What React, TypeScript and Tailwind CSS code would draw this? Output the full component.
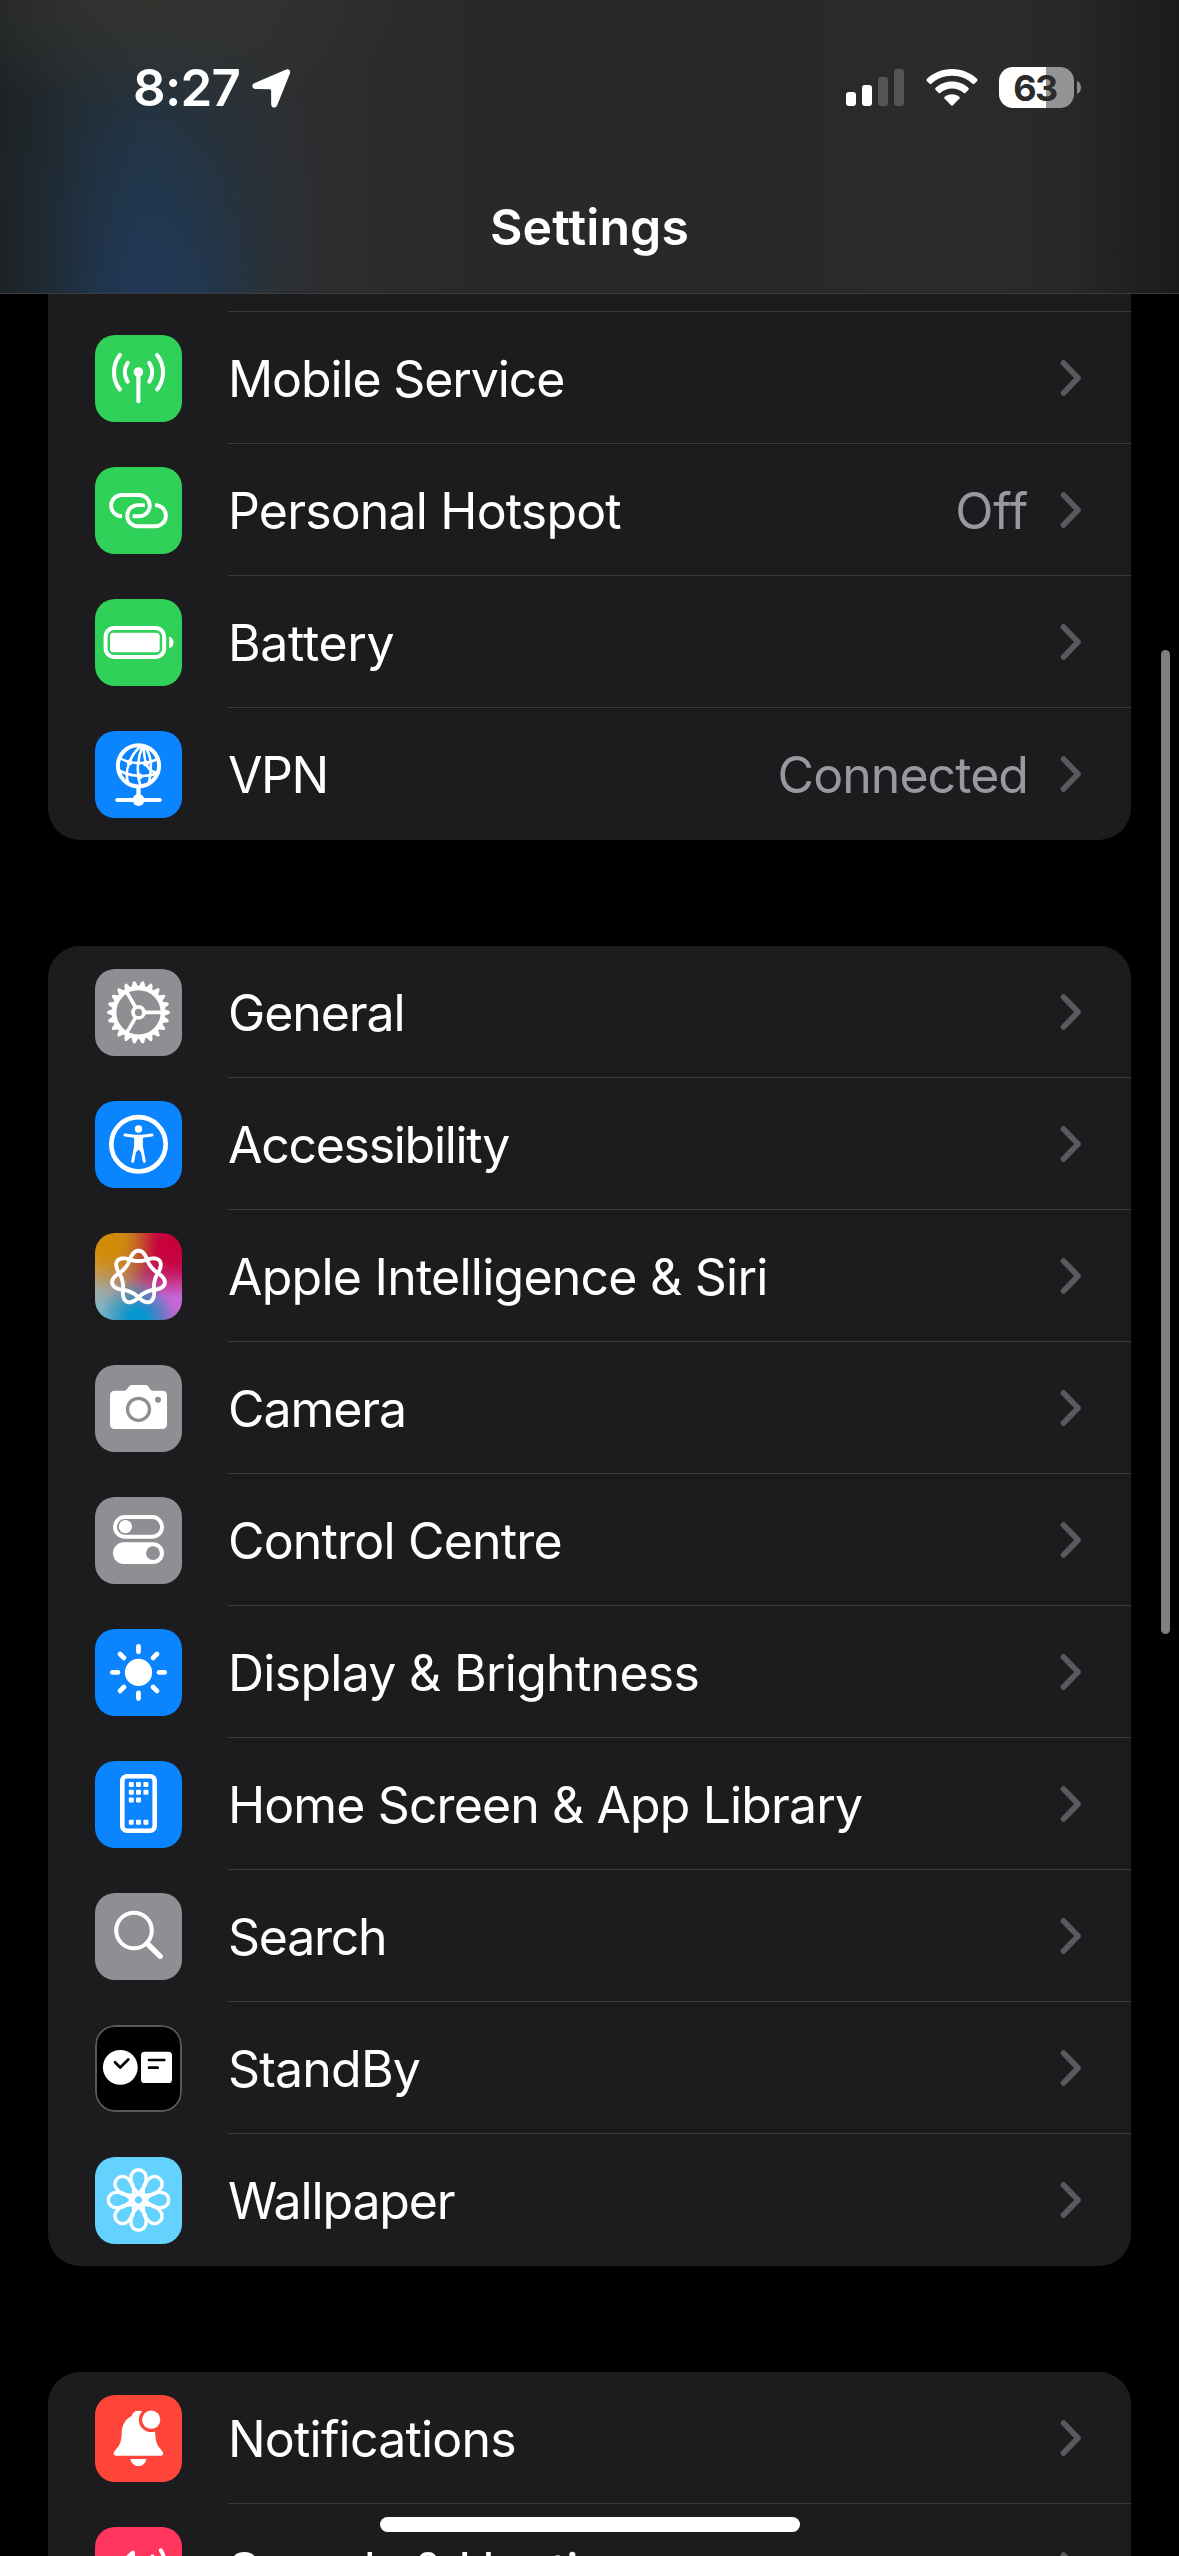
import type { ReactNode } from 'react';

type Item = {
  label: string;
  tracking: string;
  tile: string;
  icon: ReactNode;
  value?: string;
  valueTracking?: string;
};

function Glyph({ children }: { children: ReactNode }) {
  return (
    <svg viewBox="0 0 87 87" className="block h-[87px] w-[87px]" fill="none" stroke="none">
      {children}
    </svg>
  );
}

const MobileIcon = (
  <Glyph>
    <circle cx="43.4" cy="37" r="4.8" fill="#fff" />
    <g stroke="#fff" strokeWidth="4.1" strokeLinecap="round">
      <path d="M43.4 37V66.2" />
      <path d="M32.7 27.8A17 17 0 0 0 32.7 46.6" />
      <path d="M54.3 27.8A17 17 0 0 1 54.3 46.6" />
      <path d="M24.9 19.9A28 28 0 0 0 24.9 54.4" />
      <path d="M62.1 19.9A28 28 0 0 1 62.1 54.4" />
    </g>
  </Glyph>
);

const HotspotIcon = (
  <Glyph>
    <g stroke="#fff" strokeWidth="3.9">
      <path d="M27 49.2h-.3A10.6 10.6 0 0 1 26.7 28H44.2A10.6 10.6 0 0 1 44.2 49.2H37.6" />
      <path d="M49.8 38.1H42.8A10.6 10.6 0 0 0 42.8 59.3H60.3A10.6 10.6 0 0 0 60.3 38.1H60" />
    </g>
  </Glyph>
);

const BatteryIcon = (
  <Glyph>
    <rect x="10.6" y="29" width="58.6" height="29" rx="8.6" stroke="#fff" strokeWidth="4" />
    <rect x="15" y="33.7" width="49.7" height="19.6" rx="3.6" fill="#fff" />
    <path d="M74.2 37.6c2.6.8 4.4 3.2 4.4 6s-1.8 5.2-4.4 6z" fill="#fff" />
  </Glyph>
);

const VpnIcon = (
  <Glyph>
    <circle cx="43.5" cy="34.8" r="20.6" stroke="#fff" strokeWidth="4" />
    <g stroke="#fff" strokeWidth="2.6">
      <path d="M45.5 15.5C40 20 36 27 34.6 31.3C31 39 31 46 33.5 53" />
      <path d="M47.5 15.5C42.5 27 41 42 45.5 55" />
      <path d="M48.5 15.5C49 22 49.5 27 50.9 32.6C53 38 58 41 62 42" />
      <path d="M50 16C56 24 57.5 34 54 52" />
      <path d="M25.5 27.5C34 32.5 50 34.5 62.5 28" />
      <path d="M24 39.500C34 45 50 47 62 42.500" />
    </g>
    <circle cx="34.6" cy="31.3" r="2.9" fill="#fff" />
    <circle cx="50.9" cy="32.6" r="2.9" fill="#fff" />
    <circle cx="44.8" cy="45.3" r="2.9" fill="#fff" />
    <path d="M43.5 56V69" stroke="#fff" strokeWidth="4.3" />
    <path d="M22.3 69H64.7" stroke="#fff" strokeWidth="4.2" strokeLinecap="round" />
    <circle cx="43.5" cy="69" r="5.9" fill="#fff" />
  </Glyph>
);

const teeth = Array.from({ length: 22 }, (_, i) => (i * 360) / 22);

const GeneralIcon = (
  <Glyph>
    <g transform="translate(43.5 43.4)">
      {teeth.map((a) => (
        <path
          key={a}
          transform={`rotate(${a})`}
          d="M25.500-3.400L27-2.900L30.200-1.600Q31.500-1 31.500 0T30.200 1.600L27 2.900L25.500 3.400Z"
          fill="#fff"
        />
      ))}
      <circle r="24.400" stroke="#fff" strokeWidth="4.600" />
      <circle r="5.5" stroke="#fff" strokeWidth="3.7" />
      <g stroke="#fff" strokeWidth="3.6">
        <path d="M6.500 0H24" />
        <path d="M6.500 0H24" transform="rotate(120)" />
        <path d="M6.500 0H24" transform="rotate(240)" />
      </g>
    </g>
  </Glyph>
);

const AccessibilityIcon = (
  <Glyph>
    <circle cx="43.5" cy="43.3" r="27.2" stroke="#fff" strokeWidth="4.7" />
    <circle cx="43.5" cy="28" r="3.7" fill="#fff" />
    <g stroke="#fff" strokeWidth="3" strokeLinecap="round" strokeLinejoin="round">
      <path d="M30 34L39.500 35.300H47.500L57 34" />
      <path d="M40.500 46L37.700 60.300" />
      <path d="M46.500 46L49.300 60.300" />
    </g>
    <path d="M38.500 34.200H48.500L47.800 39L48 47L45.500 51L43.500 48.500L41.500 51L39 47L39.200 39Z" fill="#fff" />
  </Glyph>
);

const knot =
  Array.from({ length: 281 }, (_, i) => {
    const t = (i / 280) * Math.PI * 4;
    const p = 3.5 * t;
    const r = 20.8 + 5.2 * Math.cos(p) + 0.9 * Math.cos(2 * p);
    const x = 43.5 + r * Math.sin(t);
    const y = 44.5 - r * Math.cos(t);
    return `${i ? 'L' : 'M'}${x.toFixed(2)} ${y.toFixed(2)}`;
  }).join('') + 'Z';

const SiriIcon = (
  <Glyph>
    <path d={knot} stroke="#fff" strokeWidth="3.900" strokeLinejoin="round" />
  </Glyph>
);

const CameraIcon = (
  <Glyph>
    <path
      d="M20 25.800H28.500C30.500 25.800 31.300 25 32.500 23.500L33.700 21.800C34.700 20.500 35.600 20 37.300 20H50C51.700 20 52.600 20.500 53.500 21.800L54.700 23.500C55.800 25 56.600 25.800 58.500 25.800H67C70.300 25.800 72 27.600 72 30.800V59C72 62.200 70.300 64 67 64H20C16.700 64 15 62.200 15 59V30.800C15 27.600 16.700 25.800 20 25.800Z"
      fill="#fff"
    />
    <circle cx="43.5" cy="44.3" r="11" stroke="#8e8e93" strokeWidth="3.3" />
    <circle cx="63" cy="34.8" r="3" fill="#8e8e93" />
  </Glyph>
);

const ControlIcon = (
  <Glyph>
    <rect x="20" y="20" width="47" height="19.8" rx="9.9" stroke="#fff" strokeWidth="3.9" />
    <circle cx="30.4" cy="29.7" r="6.6" fill="#fff" />
    <rect x="18" y="45.3" width="51" height="21.7" rx="10.85" fill="#fff" />
    <circle cx="58" cy="56.2" r="6.9" fill="#8e8e93" />
  </Glyph>
);

const BrightnessIcon = (
  <Glyph>
    <g transform="translate(43.5 43.4)">
      <circle r="13.6" fill="#fff" />
      {[0, 45, 90, 135, 180, 225, 270, 315].map((a) => (
        <path
          key={a}
          d="M20.600 0H26.100"
          transform={`rotate(${a})`}
          stroke="#fff"
          strokeWidth="4.8"
          strokeLinecap="round"
        />
      ))}
    </g>
  </Glyph>
);

const dots: [number, number][] = [
  [33.8, 21], [41, 21], [48.4, 21],
  [33.8, 28.8], [41, 28.8], [48.4, 28.8],
  [33.8, 36.4], [41, 36.4],
  [33.8, 58.8], [41, 58.8], [48.4, 58.8],
];

const HomeScreenIcon = (
  <Glyph>
    <rect x="27.3" y="15.3" width="32.4" height="54.4" rx="4.6" stroke="#fff" strokeWidth="4.6" />
    {dots.map(([x, y]) => (
      <rect key={`${x}-${y}`} x={x} y={y} width="5" height="5" rx="1" fill="#fff" />
    ))}
  </Glyph>
);

const SearchIcon = (
  <Glyph>
    <circle cx="39" cy="37.500" r="17.8" stroke="#fff" strokeWidth="4.1" />
    <path d="M52.200 50.500L65.200 63.300" stroke="#fff" strokeWidth="5.3" strokeLinecap="round" />
  </Glyph>
);

const StandByIcon = (
  <Glyph>
    <rect x="1" y="1" width="85" height="85" rx="19" stroke="#58585b" strokeWidth="2" />
    <circle cx="25.3" cy="42.4" r="17.4" fill="#fff" />
    <path d="M20 37.300L25.200 42.500L33.300 34.500" stroke="#000" strokeWidth="2.7" strokeLinecap="round" strokeLinejoin="round" />
    <rect x="46" y="26.7" width="31" height="31.3" rx="3.6" fill="#fff" />
    <path d="M54 35H69.300M54 42.700H62.700" stroke="#000" strokeWidth="2.7" strokeLinecap="round" />
  </Glyph>
);

const WallpaperIcon = (
  <Glyph>
    <g transform="translate(43.5 43)">
      {[0, 45, 90, 135, 180, 225, 270, 315].map((a) => (
        <path
          key={a}
          transform={`rotate(${a})`}
          d="M1.500-4.500C-2-10-7.600-12-7.600-19V-22.600A7.600 7.600 0 0 1 7.600-22.600V-19C7.600-12 2-10-1.500-4.500"
          stroke="#fff"
          strokeWidth="3.4"
        />
      ))}
      <circle r="5" stroke="#fff" strokeWidth="2.6" fill="#64d2ff" />
    </g>
  </Glyph>
);

const NotificationsIcon = (
  <Glyph>
    <path
      d="M43.400 15.700C40 15.700 37.500 17.600 36.700 20.900C30 24.500 27 30 26.700 37.500C26.500 46.500 25 50.200 20.400 55.200C17.400 58.500 18.800 60.700 21.700 60.700H65.200C68.200 60.700 69.500 58.500 66.500 55.200C61.800 50.200 60.400 46.500 60.200 37.500L58 24L50 16.500Z"
      fill="#fff"
    />
    <circle cx="56.2" cy="24.7" r="12.4" fill="#ff453a" />
    <circle cx="56.2" cy="24.7" r="9.1" fill="#fff" />
    <path d="M35.500 64H51.300C50.700 68.300 47.600 71 43.400 71S36.100 68.300 35.500 64Z" fill="#fff" />
  </Glyph>
);

const SoundsIcon = (
  <Glyph>
    <path d="M15 36H24L36 24.500C38 22.700 40 23.300 40 26V62C40 64.700 38 65.300 36 63.500L24 53H15Z" fill="#fff" />
    <g stroke="#fff" strokeWidth="4" strokeLinecap="round">
      <path d="M57.500 29.500C62 38 62 50 57.500 58.500" />
      <path d="M65.800 23.300C73 36 73 52 65.800 64.500" />
    </g>
  </Glyph>
);

const gray = 'bg-[#8e8e93]';
const green = 'bg-[#30d158]';
const blue = 'bg-[#0a84ff]';

const connectivity: Item[] = [
  { label: 'Mobile Service', tracking: 'tracking-[-1.12px]', tile: green, icon: MobileIcon },
  { label: 'Personal Hotspot', tracking: 'tracking-[-0.83px]', tile: green, icon: HotspotIcon, value: 'Off', valueTracking: 'tracking-[-0.14px]' },
  { label: 'Battery', tracking: 'tracking-[-0.35px]', tile: green, icon: BatteryIcon },
  { label: 'VPN', tracking: 'tracking-[-1.5px]', tile: blue, icon: VpnIcon, value: 'Connected', valueTracking: 'tracking-[-0.95px]' },
];

const general: Item[] = [
  { label: 'General', tracking: 'tracking-[-1.1px]', tile: gray, icon: GeneralIcon },
  { label: 'Accessibility', tracking: 'tracking-[-1.3px]', tile: blue, icon: AccessibilityIcon },
  {
    label: 'Apple Intelligence & Siri',
    tracking: 'tracking-[-0.76px]',
    tile: 'bg-[radial-gradient(circle_at_16%_10%,#d18c00_0%,#d18c00e0_14%,#d18c0000_46%),radial-gradient(circle_at_90%_8%,#c8003a_0%,#c8003ae8_20%,#c8003a00_52%),radial-gradient(circle_at_49%_100%,#0098d4_0%,#0098d4f0_10%,#0098d400_40%),radial-gradient(circle_at_94%_74%,#c468d6_0%,#c468d6f0_12%,#c468d600_46%),radial-gradient(circle_at_98%_42%,#cb006c_0%,#cb006c00_40%),radial-gradient(circle_at_2%_98%,#72bad4_0%,#72bad400_45%),linear-gradient(90deg,#c9a078,#a5646c_55%,#b05090)]',
    icon: SiriIcon,
  },
  { label: 'Camera', tracking: 'tracking-[-1.07px]', tile: gray, icon: CameraIcon },
  { label: 'Control Centre', tracking: 'tracking-[-0.82px]', tile: gray, icon: ControlIcon },
  { label: 'Display & Brightness', tracking: 'tracking-[-0.72px]', tile: blue, icon: BrightnessIcon },
  { label: 'Home Screen & App Library', tracking: 'tracking-[-0.89px]', tile: blue, icon: HomeScreenIcon },
  { label: 'Search', tracking: 'tracking-[-1.25px]', tile: gray, icon: SearchIcon },
  { label: 'StandBy', tracking: 'tracking-[-0.8px]', tile: 'bg-black', icon: StandByIcon },
  { label: 'Wallpaper', tracking: 'tracking-[-1.15px]', tile: 'bg-[#64d2ff]', icon: WallpaperIcon },
];

const alerts: Item[] = [
  { label: 'Notifications', tracking: 'tracking-[-0.8px]', tile: 'bg-[#ff453a]', icon: NotificationsIcon },
  { label: 'Sounds & Haptics', tracking: 'tracking-[-0.95px]', tile: 'bg-[#ff375f]', icon: SoundsIcon },
];

function Row({ item, last }: { item: Item; last: boolean }) {
  return (
    <li className="flex h-[132px] pl-[47px]">
      <div className={`mt-[23px] h-[87px] w-[87px] shrink-0 overflow-hidden rounded-[20px] ${item.tile}`}>
        {item.icon}
      </div>
      <div
        className={`ml-[46px] flex flex-1 items-center whitespace-nowrap border-b pr-[49px] pt-px text-[50px] ${
          last ? 'border-transparent' : 'border-[#3c3c3f]'
        }`}
      >
        <span className={`pt-[2px] ${item.tracking}`}>{item.label}</span>
        {item.value && (
          <span className={`ml-auto pt-[2px] text-[#98989f] ${item.valueTracking}`}>{item.value}</span>
        )}
        <svg
          viewBox="0 0 22 38"
          className={`h-[38px] w-[22px] shrink-0 ${item.value ? 'ml-[32px]' : 'ml-auto'}`}
          fill="none"
        >
          <path d="M3.500 4L18 19L3.500 34" stroke="#5a5a5e" strokeWidth="5.600" strokeLinecap="round" strokeLinejoin="round" />
        </svg>
      </div>
    </li>
  );
}

function Group({ items, className }: { items: Item[]; className: string }) {
  return (
    <ul className={`shrink-0 overflow-hidden bg-[#1c1c1e] ${className}`}>
      {items.map((item, i) => (
        <Row key={item.label} item={item} last={i === items.length - 1} />
      ))}
    </ul>
  );
}

function StatusBar() {
  return (
    <div className="flex h-[176px] items-start pl-[133px] pr-[98px] pt-[58px]">
      <span className="h-[60px] text-[51px] font-semibold leading-[60px] tracking-[-0.7px]">8:27</span>
      <svg viewBox="0 0 40 40" className="ml-[11px] mt-[11px] h-[40px] w-[40px]" fill="#fff">
        <path d="M35.200.4C37.700-.6 40 1.600 39 4.200L26.200 36.200C24.800 39.800 20.200 39.200 20.200 35.200L20.100 21.600Q20.100 20.200 18.700 20.200L4.800 20.100C.6 20 .1 15.600 3.700 14.100Z" />
      </svg>
      <div className="ml-auto flex">
        <div className="mt-[11px] flex h-[37px] items-end gap-[6px]">
          <i className="h-[14px] w-[10px] rounded-[3px] bg-white" />
          <i className="h-[21px] w-[10px] rounded-[3px] bg-white" />
          <i className="h-[29px] w-[10px] rounded-[3px] bg-[#555556]" />
          <i className="h-[37px] w-[10px] rounded-[3px] bg-[#555556]" />
        </div>
        <svg viewBox="0 0 52 38" className="ml-[22px] mt-[11px] h-[38px] w-[52px]" fill="#fff">
          <path d="M26 0C36 0 44.800 3.800 51.200 10.100Q52 11 51.200 11.900L48.400 14.800Q47.500 15.600 46.600 14.800C41.200 9.700 34 6.800 26 6.800S10.800 9.700 5.400 14.800Q4.500 15.600 3.600 14.800L.8 11.900Q0 11 .8 10.100C7.200 3.800 16 0 26 0Z" />
          <path d="M26 12.600C32.400 12.600 38.200 15 42.500 19Q43.300 19.900 42.500 20.700L39.400 23.900Q38.600 24.700 37.700 23.900C34.600 21.100 30.500 19.400 26 19.400S17.400 21.100 14.300 23.900Q13.400 24.700 12.600 23.900L9.500 20.700Q8.700 19.900 9.500 19C13.800 15 19.600 12.600 26 12.600Z" />
          <path d="M26 25.200C28.900 25.200 31.500 26.200 33.500 27.900Q34.300 28.700 33.500 29.600L26.900 36.300Q26 37.200 25.100 36.300L18.500 29.600Q17.700 28.700 18.500 27.900C20.500 26.200 23.100 25.200 26 25.200Z" />
        </svg>
        <div className="ml-[21px] mt-[9px] flex h-[41px] w-[75px] items-center justify-center rounded-[14px] bg-[linear-gradient(90deg,#fff_47px,#949494_47px)] text-[36px] font-bold leading-none tracking-[-1.5px] text-[#2b2b2c]">
          <span className="-ml-[3px]">63</span>
        </div>
        <svg viewBox="0 0 4 13" className="ml-[3px] mt-[23px] h-[13px] w-[4px]" fill="#8b8b8b">
          <path d="M0 0C2.500 1 4 3.600 4 6.500S2.500 12 0 13Z" />
        </svg>
      </div>
    </div>
  );
}

export default function App() {
  return (
    <div className="relative flex h-[2556px] w-[1179px] flex-col overflow-hidden bg-black font-['Inter',sans-serif] text-white antialiased">
      <header className="h-[294px] shrink-0 border-b border-[#3a3b3d] bg-[radial-gradient(ellipse_260px_110px_at_150px_0px,#333330_0%,#333330b0_35%,#33333000_100%),linear-gradient(90deg,#1b1f21c0_0px,#1b1f2180_40px,#1b1f2130_90px,#1b1f2100_140px),radial-gradient(ellipse_130px_230px_at_142px_320px,#203a5ed0_0%,#203a5e90_35%,#203a5e30_70%,#203a5e00_100%),radial-gradient(ellipse_220px_320px_at_120px_250px,#213546_0%,#213546e0_30%,#21354670_60%,#21354618_85%,#21354600_100%),linear-gradient(90deg,#262b2d_0px,#2d3032_200px,#2e2e30_300px,#2c2c2d_360px,#292929_480px,#282828_700px,#2b2b2c_950px,#292929_1060px,#1b1b1b_1179px)]">
        <StatusBar />
        <h1 className="pt-[21px] text-center text-[50px] font-semibold leading-[60px] tracking-[0.1px]">Settings</h1>
      </header>
      <main className="flex flex-col px-[48px]">
        <div className="h-[18px] shrink-0 bg-[#1c1c1e] pl-[180px]">
          <div className="h-full border-b border-[#3c3c3f]" />
        </div>
        <Group items={connectivity} className="rounded-b-[32px]" />
        <Group items={general} className="mt-[106px] rounded-[32px]" />
        <Group items={alerts} className="mt-[106px] rounded-t-[32px]" />
      </main>
      <div className="absolute left-[1161px] top-[650px] h-[984px] w-[9px] rounded-full bg-[#808080]" />
      <div className="absolute bottom-[24px] left-[380px] h-[15px] w-[420px] rounded-full bg-white" />
    </div>
  );
}
